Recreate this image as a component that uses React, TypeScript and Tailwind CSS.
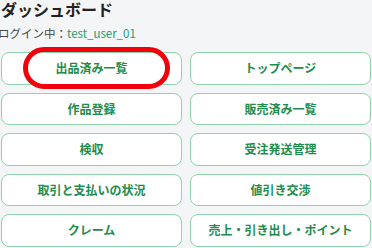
import React from 'react';

const menuItems = [
  '出品済み一覧',
  'トップページ',
  '作品登録',
  '販売済み一覧',
  '検収',
  '受注発送管理',
  '取引と支払いの状況',
  '値引き交渉',
  'クレーム',
  '売上・引き出し・ポイント',
];

export default function App() {
  return (
    <div
      className="min-h-[248px] w-[372px] overflow-hidden bg-[#f4f5f6] px-[1px]"
      style={{ fontFamily: '"Noto Sans CJK JP", "Noto Sans", sans-serif' }}
    >
      <h1 className="-mt-[2px] h-[22px] text-[16px] font-bold leading-[22px] text-[#222]">ダッシュボード</h1>
      <p className="-ml-[3px] mt-[4px] h-[18px] text-[11.5px] leading-[18px] text-[#444]">
        ログイン中：<span className="text-[#17a06c]">test_user_01</span>
      </p>

      <div className="mt-[10px] grid grid-cols-2 gap-x-2 gap-y-2">
        {menuItems.map((label, i) => (
          <div key={label} className="relative">
            <button className="flex h-[32.5px] w-full items-center justify-center rounded-lg border border-[#8fd3ac] bg-white text-[12px] font-semibold text-[#1e8c4c]">
              {label}
            </button>
            {i === 0 && (
              <div className="pointer-events-none absolute left-[22px] top-[-5px] h-[42px] w-[147px] rounded-full border-[5px] border-[#f0000a]" />
            )}
          </div>
        ))}
      </div>
    </div>
  );
}
